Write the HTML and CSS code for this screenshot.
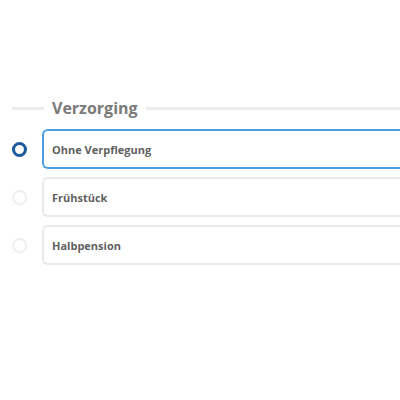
FILE: index.html
```html
<!DOCTYPE html>
<html>
<head>
<meta charset="utf-8">
<link rel="stylesheet" href="styles.css">
</head>
<body>
<div class="page">
  <div class="legend">
    <span class="rule short"></span>
    <span class="legend-text">Verzorging</span>
    <span class="rule long"></span>
  </div>
  <div class="options">
    <div class="option">
      <span class="radio checked"></span>
      <div class="box selected">Ohne Verpflegung</div>
    </div>
    <div class="option">
      <span class="radio"></span>
      <div class="box">Frühstück</div>
    </div>
    <div class="option">
      <span class="radio"></span>
      <div class="box">Halbpension</div>
    </div>
  </div>
</div>
</body>
</html>
```
FILE: styles.css
```css
html, body {
  margin: 0;
  padding: 0;
  background: #fff;
  overflow: hidden;
  width: 400px;
  height: 400px;
}
.page {
  box-sizing: border-box;
  font-family: "Open Sans", "Liberation Sans", sans-serif;
  padding-top: 97px;
  padding-left: 12px;
  width: 400px;
}
.legend {
  display: flex;
  align-items: center;
  height: 22px;
  gap: 8px;
}
.rule {
  height: 3px;
  background: #ececec;
}
.rule.short { width: 32px; }
.rule.long { flex: 1; }
.legend-text {
  font-size: 16px;
  font-weight: 700;
  color: #7a7a7a;
}
.options {
  margin-top: 10px;
  display: flex;
  flex-direction: column;
  gap: 8px;
}
.option {
  display: flex;
  align-items: center;
}
.radio {
  width: 11px;
  height: 11px;
  border: 2px solid #efefef;
  border-radius: 50%;
  margin-right: 15px;
  flex: none;
}
.radio.checked {
  width: 9px;
  height: 9px;
  border: 3px solid #1d5c9c;
}
.box {
  box-sizing: border-box;
  flex: 1;
  height: 40px;
  border: 2px solid #e9e9e9;
  border-right: none;
  border-radius: 6px 0 0 6px;
  padding-left: 8px;
  display: flex;
  align-items: center;
  font-size: 11px;
  font-weight: 700;
  color: #5f5f5f;
}
.box.selected {
  border-color: #4a9fe3;
}
```
